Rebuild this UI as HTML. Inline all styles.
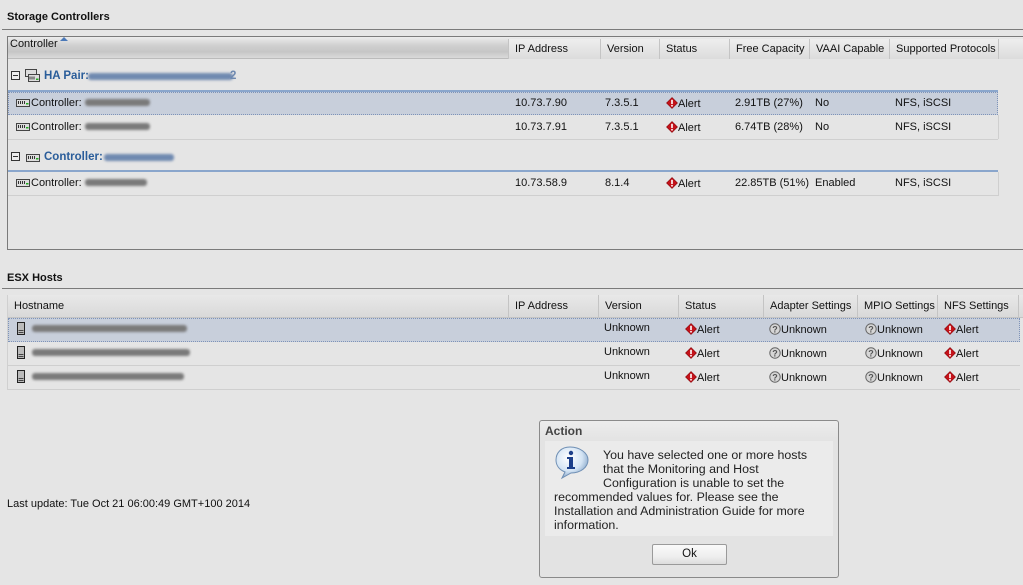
<!DOCTYPE html>
<html><head><meta charset="utf-8"><style>
*{margin:0;padding:0;box-sizing:border-box}
body{width:1023px;height:585px;background:#e5e5e5;font-family:"Liberation Sans",Arial,sans-serif;font-size:11px;color:#111;position:relative;overflow:hidden}
.a{position:absolute;white-space:nowrap}
.t{font-weight:bold;font-size:11px}
.hl{position:absolute;height:1px;background:#7a7a7a}
.hdr{position:absolute;background:linear-gradient(#ececec,#d0d0d0 40%,#c6c6c6 70%,#dadada);border-bottom:1px solid #bbb}
.hdr2{position:absolute;background:linear-gradient(#e8e8e8,#d9d9d9);border-bottom:1px solid #c4c4c4}
.col{position:absolute;top:0;height:22px;border-left:1px solid #c4c4c4;padding-left:6px;line-height:22px}
.c1{top:2px;height:20px;line-height:20px;background:linear-gradient(#eeeeee,#dcdcdc)}
.sel{position:absolute;background:#c8cfdb;border:1px dotted #7e93b8}
.rl{position:absolute;height:1px;background:#cfcfcf}
.blur{position:absolute;height:7px;background:#7a7a7a;filter:blur(1.3px);border-radius:3px}
.ic{display:inline-block;vertical-align:-2px}
.grp{color:#2a5d9a;font-weight:bold;font-size:11.5px}
</style></head><body>

<div class="a t" style="left:7px;top:11px">Storage Controllers</div>
<div class="hl" style="left:2px;top:29px;width:1021px"></div>
<div class="a" style="left:7px;top:36px;width:1020px;height:214px;border:1px solid #7a7a7a;border-right:none"></div>
<div class="hdr" style="left:8px;top:37px;width:1015px;height:22px">
 <div class="col" style="left:0;width:500px;border-left:none;padding-left:2px;line-height:14px">Controller</div>
 <div class="a" style="left:52px;top:0;width:0;height:0;border-left:4px solid transparent;border-right:4px solid transparent;border-bottom:4px solid #4a78b8"></div>
 <div class="col c1" style="left:500px;width:92px">IP Address</div>
 <div class="col c1" style="left:592px;width:59px">Version</div>
 <div class="col c1" style="left:651px;width:70px">Status</div>
 <div class="col c1" style="left:721px;width:80px">Free Capacity</div>
 <div class="col c1" style="left:801px;width:80px">VAAI Capable</div>
 <div class="col c1" style="left:881px;width:109px">Supported Protocols</div>
 <div class="col c1" style="left:990px;width:25px"></div>
</div>

<svg width="0" height="0" style="position:absolute"><defs>
<symbol id="al" viewBox="0 0 12 12"><path d="M6 0.5L11.5 6L6 11.5L0.5 6Z" fill="#c4121a" stroke="#8a0a0e" stroke-width=".6"/><rect x="5.2" y="2.8" width="1.6" height="4.3" fill="#fff"/><rect x="5.2" y="8" width="1.6" height="1.5" fill="#fff"/></symbol>
<symbol id="q" viewBox="0 0 12 12"><circle cx="6" cy="6" r="5.2" fill="#d6d6d6" stroke="#666" stroke-width="1"/><text x="6" y="9.3" font-size="9" font-weight="bold" text-anchor="middle" fill="#555" font-family="Liberation Sans">?</text></symbol>
<symbol id="ctl" viewBox="0 0 14 8"><rect x="0.5" y="0.5" width="13" height="7" fill="#ddd" stroke="#444"/><path d="M2.5 2v3M4.5 2v3M6.5 2v3M8.5 2v3" stroke="#333"/><rect x="10" y="4" width="2.5" height="1.5" fill="#2a2"/></symbol>
<symbol id="srv" viewBox="0 0 8 13"><rect x="0.5" y="0.5" width="7" height="12" fill="#bbb" stroke="#222"/><rect x="1.5" y="8" width="5" height="1" fill="#444"/><rect x="1.5" y="10" width="5" height="1" fill="#444"/></symbol>
</defs></svg>

<div class="a" style="left:11px;top:71px;width:9px;height:9px;border:1px solid #333;background:#eee"></div><div class="a" style="left:13px;top:75px;width:5px;height:1px;background:#333"></div>
<svg class="a" style="left:25px;top:69px" width="15" height="14" viewBox="0 0 15 14"><rect x="0.5" y="0.5" width="11" height="7" fill="#ddd" stroke="#444"/><rect x="3.5" y="5.5" width="11" height="7" fill="#ddd" stroke="#444"/><path d="M5 7.5v3M7 7.5v3M9 7.5v3" stroke="#333"/><rect x="11" y="9.5" width="2.5" height="1.5" fill="#2a2"/></svg>
<div class="a grp" style="left:44px;top:70px">HA Pair:</div>
<div class="blur" style="left:88px;top:73px;width:145px;background:#6f89b0"></div>
<div class="a grp" style="left:230px;top:70px;color:#6f89b0">2</div>
<div class="a" style="left:8px;top:90px;width:990px;height:2px;background:#8aa6cc"></div>

<div class="sel" style="left:8px;top:92px;width:990px;height:23px"></div>
<div class="rl" style="left:8px;top:139px;width:990px"></div>
<div class="rl" style="left:998px;top:115px;width:1px;height:24px"></div>
<svg class="a" style="left:16px;top:99px" width="14" height="8"><use href="#ctl"/></svg>
<div class="a" style="left:31px;top:97px">Controller:</div><div class="blur" style="left:85px;top:99px;width:65px"></div>
<div class="a" style="left:515px;top:97px">10.73.7.90</div><div class="a" style="left:605px;top:97px">7.3.5.1</div>
<div class="a" style="left:666px;top:97px"><svg class="ic" width="12" height="12"><use href="#al"/></svg>Alert</div>
<div class="a" style="left:735px;top:97px">2.91TB (27%)</div><div class="a" style="left:815px;top:97px">No</div><div class="a" style="left:895px;top:97px">NFS, iSCSI</div>

<svg class="a" style="left:16px;top:123px" width="14" height="8"><use href="#ctl"/></svg>
<div class="a" style="left:31px;top:121px">Controller:</div><div class="blur" style="left:85px;top:123px;width:65px"></div>
<div class="a" style="left:515px;top:121px">10.73.7.91</div><div class="a" style="left:605px;top:121px">7.3.5.1</div>
<div class="a" style="left:666px;top:121px"><svg class="ic" width="12" height="12"><use href="#al"/></svg>Alert</div>
<div class="a" style="left:735px;top:121px">6.74TB (28%)</div><div class="a" style="left:815px;top:121px">No</div><div class="a" style="left:895px;top:121px">NFS, iSCSI</div>

<div class="a" style="left:11px;top:152px;width:9px;height:9px;border:1px solid #333;background:#eee"></div><div class="a" style="left:13px;top:156px;width:5px;height:1px;background:#333"></div>
<svg class="a" style="left:26px;top:154px" width="14" height="8"><use href="#ctl"/></svg>
<div class="a grp" style="left:44px;top:151px">Controller:</div>
<div class="blur" style="left:104px;top:154px;width:70px;background:#6f89b0"></div>
<div class="a" style="left:8px;top:170px;width:990px;height:2px;background:#8aa6cc"></div>
<div class="rl" style="left:8px;top:195px;width:990px"></div>
<div class="rl" style="left:998px;top:172px;width:1px;height:24px"></div>
<svg class="a" style="left:16px;top:179px" width="14" height="8"><use href="#ctl"/></svg>
<div class="a" style="left:31px;top:177px">Controller:</div><div class="blur" style="left:85px;top:179px;width:62px"></div>
<div class="a" style="left:515px;top:177px">10.73.58.9</div><div class="a" style="left:605px;top:177px">8.1.4</div>
<div class="a" style="left:666px;top:177px"><svg class="ic" width="12" height="12"><use href="#al"/></svg>Alert</div>
<div class="a" style="left:735px;top:177px">22.85TB (51%)</div><div class="a" style="left:815px;top:177px">Enabled</div><div class="a" style="left:895px;top:177px">NFS, iSCSI</div>

<div class="a t" style="left:7px;top:272px">ESX Hosts</div>
<div class="hl" style="left:2px;top:288px;width:1021px"></div>
<div class="hdr2" style="left:8px;top:295px;width:1015px;height:23px">
 <div class="col" style="left:0;border-left:none">Hostname</div>
 <div class="col" style="left:500px">IP Address</div>
 <div class="col" style="left:590px">Version</div>
 <div class="col" style="left:670px">Status</div>
 <div class="col" style="left:755px">Adapter Settings</div>
 <div class="col" style="left:849px">MPIO Settings</div>
 <div class="col" style="left:929px">NFS Settings</div>
 <div class="col" style="left:1010px"></div>
</div>
<div class="a" style="left:7px;top:295px;width:1px;height:95px;background:#d0d0d0"></div>
<div class="sel" style="left:8px;top:318px;width:1012px;height:24px"></div>
<div class="rl" style="left:8px;top:365px;width:1012px"></div>
<div class="rl" style="left:8px;top:389px;width:1012px"></div>

<svg class="a" style="left:17px;top:322px" width="8" height="13"><use href="#srv"/></svg><div class="blur" style="left:32px;top:325px;width:155px"></div>
<div class="a" style="left:604px;top:322px">Unknown</div>
<div class="a" style="left:685px;top:323px"><svg class="ic" width="12" height="12"><use href="#al"/></svg>Alert</div>
<div class="a" style="left:769px;top:323px"><svg class="ic" width="12" height="12"><use href="#q"/></svg>Unknown</div>
<div class="a" style="left:865px;top:323px"><svg class="ic" width="12" height="12"><use href="#q"/></svg>Unknown</div>
<div class="a" style="left:944px;top:323px"><svg class="ic" width="12" height="12"><use href="#al"/></svg>Alert</div>

<svg class="a" style="left:17px;top:346px" width="8" height="13"><use href="#srv"/></svg><div class="blur" style="left:32px;top:349px;width:158px"></div>
<div class="a" style="left:604px;top:346px">Unknown</div>
<div class="a" style="left:685px;top:347px"><svg class="ic" width="12" height="12"><use href="#al"/></svg>Alert</div>
<div class="a" style="left:769px;top:347px"><svg class="ic" width="12" height="12"><use href="#q"/></svg>Unknown</div>
<div class="a" style="left:865px;top:347px"><svg class="ic" width="12" height="12"><use href="#q"/></svg>Unknown</div>
<div class="a" style="left:944px;top:347px"><svg class="ic" width="12" height="12"><use href="#al"/></svg>Alert</div>

<svg class="a" style="left:17px;top:370px" width="8" height="13"><use href="#srv"/></svg><div class="blur" style="left:32px;top:373px;width:152px"></div>
<div class="a" style="left:604px;top:370px">Unknown</div>
<div class="a" style="left:685px;top:371px"><svg class="ic" width="12" height="12"><use href="#al"/></svg>Alert</div>
<div class="a" style="left:769px;top:371px"><svg class="ic" width="12" height="12"><use href="#q"/></svg>Unknown</div>
<div class="a" style="left:865px;top:371px"><svg class="ic" width="12" height="12"><use href="#q"/></svg>Unknown</div>
<div class="a" style="left:944px;top:371px"><svg class="ic" width="12" height="12"><use href="#al"/></svg>Alert</div>

<div class="a" style="left:7px;top:498px">Last update: Tue Oct 21 06:00:49 GMT+100 2014</div>

<div class="a" style="left:539px;top:420px;width:300px;height:158px;border:1px solid #8a8a8a;border-radius:3px;background:linear-gradient(#ececec,#e3e3e3 20px,#e3e3e3)"></div>
<div class="a" style="left:545px;top:424px;font-weight:bold;font-size:12px;color:#444">Action</div>
<div class="a" style="left:545px;top:441px;width:288px;height:95px;background:#ebebeb"></div>
<svg class="a" style="left:554px;top:445px" width="36" height="35" viewBox="0 0 36 35">
 <defs><radialGradient id="bg" cx=".4" cy=".35" r=".7"><stop offset="0" stop-color="#fff"/><stop offset=".6" stop-color="#d4e4f4"/><stop offset="1" stop-color="#7e9fc4"/></radialGradient></defs>
 <path d="M16 2C7 2 2 8 2 15c0 6 4 10 9 12l-3 6 9-5c10 0 17-6 17-13S26 2 16 2Z" fill="url(#bg)" stroke="#6f8fb4" stroke-width="1"/>
 <circle cx="17" cy="8" r="2.2" fill="#1c3f8a"/>
 <path d="M13 12h6v10h2v2h-8v-2h2v-8h-2z" fill="#1c3f8a"/>
</svg>
<div class="a" style="left:554px;top:448px;font-size:12.4px;line-height:14px;color:#222;white-space:normal;width:278px">
<div style="padding-left:49px">You have selected one or more hosts</div>
<div style="padding-left:49px">that the Monitoring and Host</div>
<div style="padding-left:49px">Configuration is unable to set the</div>
<div>recommended values for. Please see the</div>
<div>Installation and Administration Guide for more</div>
<div>information.</div>
</div>
<div class="a" style="left:652px;top:544px;width:75px;height:21px;border:1px solid #9a9a9a;border-radius:2px;background:linear-gradient(#fafafa,#eee 60%,#ddd);text-align:center;line-height:19px;font-size:11.5px">Ok</div>

</body></html>
